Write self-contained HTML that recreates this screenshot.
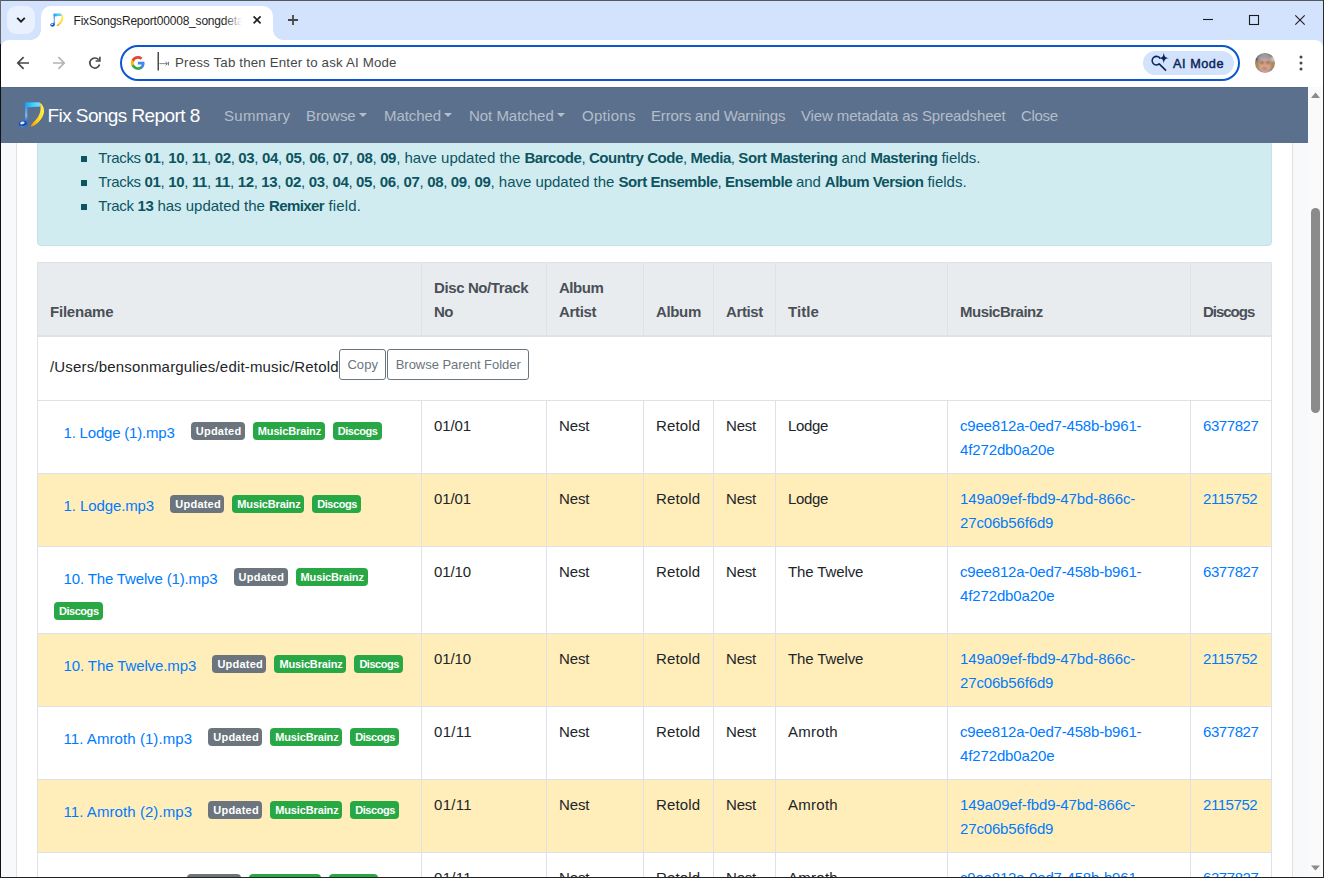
<!DOCTYPE html>
<html lang="en">
<head>
<meta charset="utf-8">
<title>FixSongsReport00008_songdetails</title>
<style>
*{box-sizing:border-box;margin:0;padding:0}
html,body{width:1324px;height:878px;overflow:hidden;background:#fff}
body{font-family:"Liberation Sans",sans-serif;font-size:15px;line-height:24px;color:#212529;position:relative}
.abs{position:absolute}
/* ---------- window frame ---------- */
#frame-top{left:0;top:0;width:1324px;height:1px;background:#55585f}
#frame-left{left:0;top:0;width:1px;height:878px;background:linear-gradient(#666 0,#666 44px,#111 44px,#111 878px)}
#frame-right{left:1323px;top:0;width:1px;height:878px;background:#2a2d30}
#frame-bottom{left:0;top:877px;width:1324px;height:1px;background:#222}
/* ---------- tab strip ---------- */
#tabstrip{left:1px;top:1px;width:1322px;height:50px;background:#d3e3fd}
#tabsearch{left:7px;top:6px;width:28px;height:28px;border-radius:9px;background:#e9f0fe}
#tab{left:41px;top:6px;width:232px;height:34px;background:#fff;border-radius:10px 10px 0 0}
#tab:before,#tab:after{content:"";position:absolute;bottom:0;width:10px;height:10px;background:radial-gradient(circle at 0 0,rgba(255,255,255,0) 9.5px,#fff 10px)}
#tab:before{left:-10px}
#tab:after{right:-10px;background:radial-gradient(circle at 100% 0,rgba(255,255,255,0) 9.5px,#fff 10px)}
#tabtitle{left:73.5px;top:13px;width:168px;height:16px;font-size:12px;line-height:16px;color:#1f1f1f;white-space:nowrap;overflow:hidden;letter-spacing:-0.2px}
#tabfade{left:224px;top:10px;width:18px;height:20px;background:linear-gradient(90deg,rgba(255,255,255,0),#fff)}
/* ---------- toolbar ---------- */
#toolbar{left:1px;top:40px;width:1322px;height:47px;background:#fff;border-radius:8px 8px 0 0}
#omni{left:120px;top:45px;width:1120px;height:36px;border:2px solid #0b57d0;border-radius:18px;background:#fff}
#omnitext{left:175px;top:54px;font-size:13.3px;line-height:18px;color:#474747;white-space:nowrap}
#aimode{left:1143px;top:51px;width:91px;height:24px;border-radius:12px;background:#d3e3fd}
#aitext{left:1173px;top:55px;font-size:12.7px;line-height:18px;color:#0b2559;font-weight:normal;-webkit-text-stroke:0.45px #0b2559;white-space:nowrap}
/* ---------- page ---------- */
#page{left:1px;top:87px;width:1307px;height:790px;background:#fff;overflow:hidden}
#gutl{left:0;top:56px;width:16px;height:734px;background:#f8f9fa;border-right:1px solid #dee2e6}
#gutr{left:1291px;top:56px;width:16px;height:734px;background:#f8f9fa;border-left:1px solid #dee2e6}
#navbar{left:0;top:0;width:1307px;height:56px;background:#5b708c;box-shadow:inset 0 1px 0 #566a88}
#brand{left:46.5px;top:15px;font-size:19px;line-height:28px;color:#fff;white-space:nowrap}
.nl{position:absolute;top:17px;font-size:15px;line-height:24px;color:rgba(255,255,255,.55);white-space:nowrap}
.caret{display:inline-block;width:0;height:0;border-left:4px solid transparent;border-right:4px solid transparent;border-top:4px solid rgba(255,255,255,.55);vertical-align:middle;margin-left:3.3px;position:relative;top:-2px}
/* scrollbar */
#sb{left:1308px;top:87px;width:15px;height:790px;background:#fafafa}
#sbthumb{left:1311px;top:208px;width:9px;height:205px;border-radius:5px;background:#8b8b8b}
/* alert */
#alert{left:36px;top:50px;width:1235px;height:109px;background:#d1ecf1;border:1px solid #bee5eb;border-radius:0 0 4px 4px;color:#0c5460}
.li{position:absolute;left:60.3px;white-space:pre;font-size:15px;line-height:24px}
.li b{font-weight:bold}
.bul{position:absolute;left:43px;width:6px;height:6px;background:#0c5460}
/* table */
table{position:absolute;left:36px;top:175px;width:1235px;border-collapse:separate;border-spacing:0;table-layout:fixed}
th,td{border:0 solid #dee2e6;border-width:1px 0 0 1px;padding:13px 12px 11px;vertical-align:top;text-align:left;font-size:15px;line-height:24px;overflow:hidden}
thead th{background:#e9ecef;color:#495057;font-weight:bold;vertical-align:bottom;border-bottom:2px solid #dee2e6;height:75px}
th:last-child,td:last-child{border-right-width:1px}
tr.w td{background:#ffeeba}
a{color:#007bff;text-decoration:none}
.fn{display:inline-block;padding:8px 12.2px 6px 13.5px;line-height:24px;vertical-align:middle;white-space:nowrap}
.bd{display:inline-block;height:18px;line-height:18px;padding:0 5px;font-size:11px;font-weight:bold;color:#fff;border-radius:4px;vertical-align:middle;white-space:nowrap;margin:0 4px;text-align:center;position:relative;top:-1px}
.bs{background:#6c757d;width:54px}
.bm{background:#28a745;width:72px}
.bg{background:#28a745;width:49px}
.c1{white-space:normal;font-size:0;padding:12px}
.bd.wr{top:2px}
.c1 .fn{font-size:15px}
#ptd{height:63px;border-top:0;white-space:nowrap;padding:12px 12px 0;font-size:0}
#path{font-size:15px;position:relative;top:6px}
.btn{display:inline-block;height:31px;border:1px solid #6c757d;border-radius:3px;color:#6c757d;font-size:13px;line-height:30px;padding:0 8px;vertical-align:top;white-space:nowrap;background:#fff;margin-left:1px;text-align:center}
#bcopy{width:47.5px;padding:0;margin-left:.3px}
#bbrowse{width:142.5px;padding:0;margin-left:.5px}
/*LS*/
#brand{letter-spacing:-0.579px}
#n1{letter-spacing:0.319px}
#n2 .x{letter-spacing:-0.066px}
#n3 .x{letter-spacing:-0.058px}
#n4 .x{letter-spacing:-0.030px}
#n5{letter-spacing:0.299px}
#n6{letter-spacing:-0.139px}
#n7{letter-spacing:-0.128px}
#n8{letter-spacing:-0.340px}
#h1{letter-spacing:-0.219px}
#h2a{letter-spacing:-0.393px}
#h2b{letter-spacing:-0.500px}
#h3a{letter-spacing:-0.480px}
#h3b{letter-spacing:-0.334px}
#h4{letter-spacing:-0.355px}
#h5{letter-spacing:-0.384px}
#h6{letter-spacing:0.043px}
#h7{letter-spacing:-0.511px}
#h8{letter-spacing:-1.018px}
#path{letter-spacing:0.172px}
#bcopy span{letter-spacing:0.047px}
#bbrowse span{letter-spacing:-0.039px}
#f1{letter-spacing:-0.197px}
#f2{letter-spacing:-0.095px}
#f3{letter-spacing:-0.144px}
#f4{letter-spacing:-0.102px}
#f5{letter-spacing:0.072px}
#f6{letter-spacing:0.072px}
#f7{letter-spacing:0.178px}
.k01{letter-spacing:-0.137px}
.k10{letter-spacing:-0.087px}
.k11{letter-spacing:0.316px}
.caa .t{letter-spacing:-0.115px}
.cal .t{letter-spacing:0.128px}
.car .t{letter-spacing:-0.198px}
.kl{letter-spacing:-0.367px}
.kt{letter-spacing:-0.115px}
.ka{letter-spacing:0.268px}
tr:not(.w) .m1{letter-spacing:-0.193px}
tr:not(.w) .m2{letter-spacing:-0.126px}
tr.w .m1{letter-spacing:-0.100px}
tr.w .m2{letter-spacing:-0.149px}
.dc{letter-spacing:-0.434px}
.bs span{letter-spacing:0.233px}
.bm span{letter-spacing:-0.140px}
.bg span{letter-spacing:-0.466px}
#omnitext{letter-spacing:0.174px}
#aitext{letter-spacing:0.542px}
#l1a{letter-spacing:-0.339px}
#l1b{letter-spacing:-0.349px}
#l1c{letter-spacing:-0.010px}
#l1d{letter-spacing:-0.426px}
#l1e{letter-spacing:-0.075px}
#l1f{letter-spacing:-0.429px}
#l1g{letter-spacing:-0.051px}
#l2a{letter-spacing:-0.339px}
#l2b{letter-spacing:-0.336px}
#l2c{letter-spacing:-0.023px}
#l2d{letter-spacing:-0.467px}
#l2e{letter-spacing:-0.125px}
#l2f{letter-spacing:-0.502px}
#l2g{letter-spacing:-0.016px}
#l3a{letter-spacing:-0.312px}
#l3b{letter-spacing:-0.469px}
#l3c{letter-spacing:-0.011px}
#l3d{letter-spacing:-0.600px}
#l3e{letter-spacing:0.148px}
/*ENDLS*/
</style>
</head>
<body>
<!-- chrome: tab strip -->
<div class="abs" id="tabstrip"></div>
<div class="abs" id="tabsearch"></div>
<div class="abs" id="tab"></div>
<div class="abs" id="tabtitle">FixSongsReport00008_songdetails</div>
<div class="abs" id="tabfade"></div>
<!-- chrome: toolbar -->
<div class="abs" id="toolbar"></div>
<div class="abs" id="omni"></div>
<div class="abs" id="omnitext">Press Tab then Enter to ask AI Mode</div>
<div class="abs" id="aimode"></div>
<div class="abs" id="aitext">AI Mode</div>
<svg class="abs" id="chromeicons" style="left:0;top:0" width="1324" height="87" viewBox="0 0 1324 87">
  <defs>
    <linearGradient id="gbeam" x1="0" y1="0" x2="1" y2="0"><stop offset="0" stop-color="#1e9cf0"/><stop offset=".55" stop-color="#3fd2ff"/><stop offset="1" stop-color="#7fd8f8"/></linearGradient>
    <linearGradient id="gstem" x1="0" y1="0" x2="0" y2="1"><stop offset="0" stop-color="#1b8ae8"/><stop offset=".55" stop-color="#7db4ea"/><stop offset=".75" stop-color="#1f7ae0"/><stop offset="1" stop-color="#1a56c8"/></linearGradient>
    <linearGradient id="gcres" x1="0" y1="0" x2="1" y2="0"><stop offset="0" stop-color="#ffb400"/><stop offset=".55" stop-color="#ffd61a"/><stop offset="1" stop-color="#fff45a"/></linearGradient>
    <linearGradient id="gcres2" x1="0" y1="0" x2="0" y2="1"><stop offset="0" stop-color="#ffe23a" stop-opacity="0"/><stop offset=".8" stop-color="#ffa000" stop-opacity=".0"/><stop offset="1" stop-color="#ff8a00" stop-opacity=".9"/></linearGradient>
    <symbol id="note" viewBox="18 101 27 27">
      <path d="M25,102.6 L39.3,102.3 C40,103.5 40.2,105 40,106.4 L27.4,107.3 L27.4,122.5 C27.4,125.2 25.4,126.9 22.6,126.9 C20.2,126.9 18.8,125.6 18.9,124.1 C19,122.2 20.9,120.8 23.2,120.8 C23.9,120.8 24.5,120.9 25,121.1 Z" fill="url(#gstem)"/>
      <path d="M25,102.6 L39.3,102.3 C40,103.5 40.2,105 40,106.4 L27.4,107.3 L25,107.3 Z" fill="url(#gbeam)"/>
      <ellipse cx="22.8" cy="123.9" rx="3.9" ry="3" transform="rotate(-14 22.8 123.9)" fill="#1d3fb4"/>
      <path d="M19,124.6 C20,126.6 24.6,127.2 26.6,124.2 C26,127.6 19.6,128 19,124.6 Z" fill="#2cc4ee"/>
      <ellipse cx="22.4" cy="122.9" rx="2.3" ry="1.4" transform="rotate(-14 22.4 122.9)" fill="#cfeefc"/>
      <path d="M39.2,102.6 C43.6,104.6 45.6,110.4 42.6,116.4 C40.2,121.2 35.4,125.4 31.4,126.4 C30.9,125.4 31.6,124.4 33.6,122.2 C38.6,117.6 42.4,110.8 39.6,103 Z" fill="url(#gcres)"/>
      <path d="M39.2,102.6 C43.6,104.6 45.6,110.4 42.6,116.4 C40.2,121.2 35.4,125.4 31.4,126.4 C30.9,125.4 31.6,124.4 33.6,122.2 C38.6,117.6 42.4,110.8 39.6,103 Z" fill="url(#gcres2)"/>
    </symbol>
    <filter id="avblur" x="-10%" y="-10%" width="120%" height="120%"><feGaussianBlur stdDeviation="1"/></filter>
    <clipPath id="avclip"><circle cx="1265" cy="62.9" r="10"/></clipPath>
  </defs>
  <!-- tab search chevron -->
  <path d="M17.2,17.9 L21,21.7 L24.8,17.9" fill="none" stroke="#1f1f1f" stroke-width="1.9"/>
  <!-- favicon -->
  <use href="#note" x="50" y="13" width="14" height="14"/>
  <!-- tab close -->
  <path d="M253.6,16.4 L260.6,23.4 M260.6,16.4 L253.6,23.4" fill="none" stroke="#1f1f1f" stroke-width="1.6"/>
  <!-- new tab -->
  <path d="M288,20 H298 M293,15 V25" fill="none" stroke="#474747" stroke-width="1.8"/>
  <!-- window controls -->
  <path d="M1203,19.5 H1213" stroke="#1b1b1b" stroke-width="1.1" fill="none"/>
  <rect x="1249.5" y="15.5" width="9" height="9" fill="none" stroke="#1b1b1b" stroke-width="1.1"/>
  <path d="M1295.3,15.3 L1304.7,24.7 M1304.7,15.3 L1295.3,24.7" stroke="#1b1b1b" stroke-width="1.1" fill="none"/>
  <!-- back / forward / reload -->
  <path d="M29,63 H18.4 M23.6,57.2 L17.8,63 L23.6,68.8" fill="none" stroke="#474747" stroke-width="1.7"/>
  <path d="M53,63 H63.6 M58.4,57.2 L64.2,63 L58.4,68.8" fill="none" stroke="#b4b4b4" stroke-width="1.7"/>
  <path d="M99.6,64.6 A5,5 0 1 1 98.7,59.8" fill="none" stroke="#474747" stroke-width="1.7"/>
  <path d="M99.9,56.8 V61 H95.6" fill="none" stroke="#474747" stroke-width="1.6"/>
  <!-- google G -->
  <g transform="translate(130.3,55.4) scale(0.316)">
    <path fill="#4285F4" d="M45.12 24.5c0-1.56-.14-3.06-.4-4.5H24v8.51h11.84c-.51 2.75-2.06 5.08-4.39 6.64v5.52h7.11c4.16-3.83 6.56-9.47 6.56-16.17z"/>
    <path fill="#34A853" d="M24 46c5.94 0 10.92-1.97 14.56-5.33l-7.11-5.52c-1.97 1.32-4.49 2.1-7.45 2.1-5.73 0-10.58-3.87-12.31-9.07H4.34v5.7C7.96 41.07 15.4 46 24 46z"/>
    <path fill="#FBBC05" d="M11.69 28.18C11.25 26.86 11 25.45 11 24s.25-2.86.69-4.18v-5.7H4.34C2.85 17.09 2 20.45 2 24c0 3.55.85 6.91 2.34 9.88l7.35-5.7z"/>
    <path fill="#EA4335" d="M24 10.75c3.23 0 6.13 1.11 8.41 3.29l6.31-6.31C34.91 4.18 29.93 2 24 2 15.4 2 7.96 6.93 4.34 14.12l7.35 5.7c1.73-5.2 6.58-9.07 12.31-9.07z"/>
  </g>
  <!-- omnibox caret + tab glyph -->
  <rect x="157.6" y="52" width="1.2" height="18.5" fill="#1f1f1f"/>
  <path d="M159.4,63.6 H167" fill="none" stroke="#8a8a8a" stroke-width="1"/><path d="M165.6,62 L167.4,63.6 L165.6,65.2 M168.4,61.8 V65.4" fill="none" stroke="#6a6a7a" stroke-width="1"/>
  <!-- AI mode icon -->
  <path d="M1160.2,58.6 A4.3,4.3 0 1 0 1159.6,63.6" fill="none" stroke="#0b2559" stroke-width="1.5"/>
  <path d="M1159.2,63.9 L1166,70.6" fill="none" stroke="#0b2559" stroke-width="1.6"/>
  <path d="M1163.8,52.4 C1164.3,56.4 1165.2,57.5 1169.2,58.1 C1165.2,58.7 1164.3,59.8 1163.8,63.8 C1163.3,59.8 1162.4,58.7 1158.4,58.1 C1162.4,57.5 1163.3,56.4 1163.8,52.4 Z" fill="#0b2559"/>
  <!-- avatar -->
  <g clip-path="url(#avclip)"><g filter="url(#avblur)">
    <rect x="1250" y="48" width="30" height="30" fill="#a98a55"/>
    <rect x="1254" y="52" width="22" height="22" fill="#a98a55"/>
    <rect x="1254" y="52" width="22" height="8" fill="#5c6a4e"/>
    <rect x="1254" y="52" width="7" height="9" fill="#3a3f3a"/>
    <rect x="1271" y="57" width="5" height="4" fill="#d9c9c4"/>
    <path d="M1258,74 L1259,70 L1263,72 L1268,72 L1271,69 L1275,74 Z" fill="#3e6fc0"/>
    <ellipse cx="1264.4" cy="58.6" rx="7" ry="5.6" fill="#9c9ca6"/>
    <ellipse cx="1264.8" cy="66.2" rx="6" ry="7.6" fill="#d7a48c"/>
    <ellipse cx="1264.8" cy="61.4" rx="5" ry="2.4" fill="#dcab96"/>
    <rect x="1260.6" y="61.4" width="3.2" height="2.2" fill="#6a4630"/>
    <rect x="1266" y="61.4" width="3.2" height="2.2" fill="#6a4630"/>
    <rect x="1262.6" y="67.6" width="4.4" height="2" fill="#b06a5c"/>
  </g></g>
  <!-- menu dots -->
  <circle cx="1301" cy="57" r="1.5" fill="#474747"/><circle cx="1301" cy="63" r="1.5" fill="#474747"/><circle cx="1301" cy="69" r="1.5" fill="#474747"/>
</svg>
<!-- page -->
<div class="abs" id="page">
  <div class="abs" id="gutl"></div>
  <div class="abs" id="gutr"></div>
  <div class="abs" id="alert">
    <span class="bul" style="top:18px"></span><div class="li" id="li1" style="top:8px"><span id="l1a">Tracks </span><span id="l1b"><b>01</b>, <b>10</b>, <b>11</b>, <b>02</b>, <b>03</b>, <b>04</b>, <b>05</b>, <b>06</b>, <b>07</b>, <b>08</b>, <b>09</b></span><span id="l1c">, have updated the </span><span id="l1d"><b>Barcode</b>, <b>Country Code</b>, <b>Media</b>, <b>Sort Mastering</b></span><span id="l1e"> and </span><span id="l1f"><b>Mastering</b></span><span id="l1g"> fields.</span></div>
    <span class="bul" style="top:42px"></span><div class="li" id="li2" style="top:32px"><span id="l2a">Tracks </span><span id="l2b"><b>01</b>, <b>10</b>, <b>11</b>, <b>11</b>, <b>12</b>, <b>13</b>, <b>02</b>, <b>03</b>, <b>04</b>, <b>05</b>, <b>06</b>, <b>07</b>, <b>08</b>, <b>09</b>, <b>09</b></span><span id="l2c">, have updated the </span><span id="l2d"><b>Sort Ensemble</b>, <b>Ensemble</b></span><span id="l2e"> and </span><span id="l2f"><b>Album Version</b></span><span id="l2g"> fields.</span></div>
    <span class="bul" style="top:66px"></span><div class="li" id="li3" style="top:56px"><span id="l3a">Track </span><span id="l3b"><b>13</b></span><span id="l3c"> has updated the </span><span id="l3d"><b>Remixer</b></span><span id="l3e"> field.</span></div>
  </div>
  <div class="abs" id="navbar">
    <svg class="abs" style="left:17px;top:14px" width="27" height="27"><use href="#note" x="0" y="0" width="27" height="27"/></svg>
    <div class="abs" id="brand">Fix Songs Report 8</div>
    <div class="nl" id="n1" style="left:223px">Summary</div>
    <div class="nl" id="n2" style="left:305px"><span class="x">Browse</span><span class="caret"></span></div>
    <div class="nl" id="n3" style="left:383px"><span class="x">Matched</span><span class="caret"></span></div>
    <div class="nl" id="n4" style="left:468px"><span class="x">Not Matched</span><span class="caret"></span></div>
    <div class="nl" id="n5" style="left:581px">Options</div>
    <div class="nl" id="n6" style="left:650px">Errors and Warnings</div>
    <div class="nl" id="n7" style="left:800px">View metadata as Spreadsheet</div>
    <div class="nl" id="n8" style="left:1020px">Close</div>
  </div>
  <table>
    <colgroup><col style="width:384px"><col style="width:125px"><col style="width:97px"><col style="width:70px"><col style="width:62px"><col style="width:172px"><col style="width:243px"><col style="width:82px"></colgroup>
    <thead><tr><th><span id="h1">Filename</span></th><th><span id="h2a">Disc No/Track</span><br><span id="h2b">No</span></th><th><span id="h3a">Album</span><br><span id="h3b">Artist</span></th><th><span id="h4">Album</span></th><th><span id="h5">Artist</span></th><th><span id="h6">Title</span></th><th><span id="h7">MusicBrainz</span></th><th><span id="h8">Discogs</span></th></tr></thead>
    <tbody>
      <tr><td colspan="8" id="ptd"><span id="path">/Users/bensonmargulies/edit-music/Retold</span><span class="btn" id="bcopy"><span>Copy</span></span><span class="btn" id="bbrowse"><span>Browse Parent Folder</span></span></td></tr>
      <tr><td class="c1"><a class="fn" id="f1">1. Lodge (1).mp3</a><span class="bd bs"><span>Updated</span></span><span class="bd bm"><span>MusicBrainz</span></span><span class="bd bg"><span>Discogs</span></span></td><td class="ctr"><span class="t k01">01/01</span></td><td class="caa"><span class="t">Nest</span></td><td class="cal"><span class="t">Retold</span></td><td class="car"><span class="t">Nest</span></td><td class="cti"><span class="t kl">Lodge</span></td><td class="cmb"><a class="mb"><span class="m1">c9ee812a-0ed7-458b-b961-</span><br><span class="m2">4f272db0a20e</span></a></td><td class="cdc"><a class="dc">6377827</a></td></tr>
      <tr class="w"><td class="c1"><a class="fn" id="f2">1. Lodge.mp3</a><span class="bd bs"><span>Updated</span></span><span class="bd bm"><span>MusicBrainz</span></span><span class="bd bg"><span>Discogs</span></span></td><td class="ctr"><span class="t k01">01/01</span></td><td class="caa"><span class="t">Nest</span></td><td class="cal"><span class="t">Retold</span></td><td class="car"><span class="t">Nest</span></td><td class="cti"><span class="t kl">Lodge</span></td><td class="cmb"><a class="mb"><span class="m1">149a09ef-fbd9-47bd-866c-</span><br><span class="m2">27c06b56f6d9</span></a></td><td class="cdc"><a class="dc">2115752</a></td></tr>
      <tr><td class="c1"><a class="fn" id="f3">10. The Twelve (1).mp3</a><span class="bd bs"><span>Updated</span></span><span class="bd bm"><span>MusicBrainz</span></span><span class="bd bg wr"><span>Discogs</span></span></td><td class="ctr"><span class="t k10">01/10</span></td><td class="caa"><span class="t">Nest</span></td><td class="cal"><span class="t">Retold</span></td><td class="car"><span class="t">Nest</span></td><td class="cti"><span class="t kt">The Twelve</span></td><td class="cmb"><a class="mb"><span class="m1">c9ee812a-0ed7-458b-b961-</span><br><span class="m2">4f272db0a20e</span></a></td><td class="cdc"><a class="dc">6377827</a></td></tr>
      <tr class="w"><td class="c1"><a class="fn" id="f4">10. The Twelve.mp3</a><span class="bd bs"><span>Updated</span></span><span class="bd bm"><span>MusicBrainz</span></span><span class="bd bg"><span>Discogs</span></span></td><td class="ctr"><span class="t k10">01/10</span></td><td class="caa"><span class="t">Nest</span></td><td class="cal"><span class="t">Retold</span></td><td class="car"><span class="t">Nest</span></td><td class="cti"><span class="t kt">The Twelve</span></td><td class="cmb"><a class="mb"><span class="m1">149a09ef-fbd9-47bd-866c-</span><br><span class="m2">27c06b56f6d9</span></a></td><td class="cdc"><a class="dc">2115752</a></td></tr>
      <tr><td class="c1"><a class="fn" id="f5">11. Amroth (1).mp3</a><span class="bd bs"><span>Updated</span></span><span class="bd bm"><span>MusicBrainz</span></span><span class="bd bg"><span>Discogs</span></span></td><td class="ctr"><span class="t k11">01/11</span></td><td class="caa"><span class="t">Nest</span></td><td class="cal"><span class="t">Retold</span></td><td class="car"><span class="t">Nest</span></td><td class="cti"><span class="t ka">Amroth</span></td><td class="cmb"><a class="mb"><span class="m1">c9ee812a-0ed7-458b-b961-</span><br><span class="m2">4f272db0a20e</span></a></td><td class="cdc"><a class="dc">6377827</a></td></tr>
      <tr class="w"><td class="c1"><a class="fn" id="f6">11. Amroth (2).mp3</a><span class="bd bs"><span>Updated</span></span><span class="bd bm"><span>MusicBrainz</span></span><span class="bd bg"><span>Discogs</span></span></td><td class="ctr"><span class="t k11">01/11</span></td><td class="caa"><span class="t">Nest</span></td><td class="cal"><span class="t">Retold</span></td><td class="car"><span class="t">Nest</span></td><td class="cti"><span class="t ka">Amroth</span></td><td class="cmb"><a class="mb"><span class="m1">149a09ef-fbd9-47bd-866c-</span><br><span class="m2">27c06b56f6d9</span></a></td><td class="cdc"><a class="dc">2115752</a></td></tr>
      <tr><td class="c1"><a class="fn" id="f7">11. Amroth.mp3</a><span class="bd bs"><span>Updated</span></span><span class="bd bm"><span>MusicBrainz</span></span><span class="bd bg"><span>Discogs</span></span></td><td class="ctr"><span class="t k11">01/11</span></td><td class="caa"><span class="t">Nest</span></td><td class="cal"><span class="t">Retold</span></td><td class="car"><span class="t">Nest</span></td><td class="cti"><span class="t ka">Amroth</span></td><td class="cmb"><a class="mb"><span class="m1">c9ee812a-0ed7-458b-b961-</span><br><span class="m2">4f272db0a20e</span></a></td><td class="cdc"><a class="dc">6377827</a></td></tr>
    </tbody>
  </table>
</div>
<div class="abs" id="sb"></div>
<div class="abs" id="sbthumb"></div>
<svg class="abs" style="left:1308px;top:87px" width="15" height="790"><path d="M3,11 L7.5,5.6 L12,11 Z" fill="#8b8b8b"/><path d="M3,778.4 L7.5,783.6 L12,778.4 Z" fill="#8b8b8b"/></svg>
<!-- frame -->
<div class="abs" id="frame-top"></div>
<div class="abs" id="frame-left"></div>
<div class="abs" id="frame-right"></div>
<div class="abs" id="frame-bottom"></div>
</body>
</html>
